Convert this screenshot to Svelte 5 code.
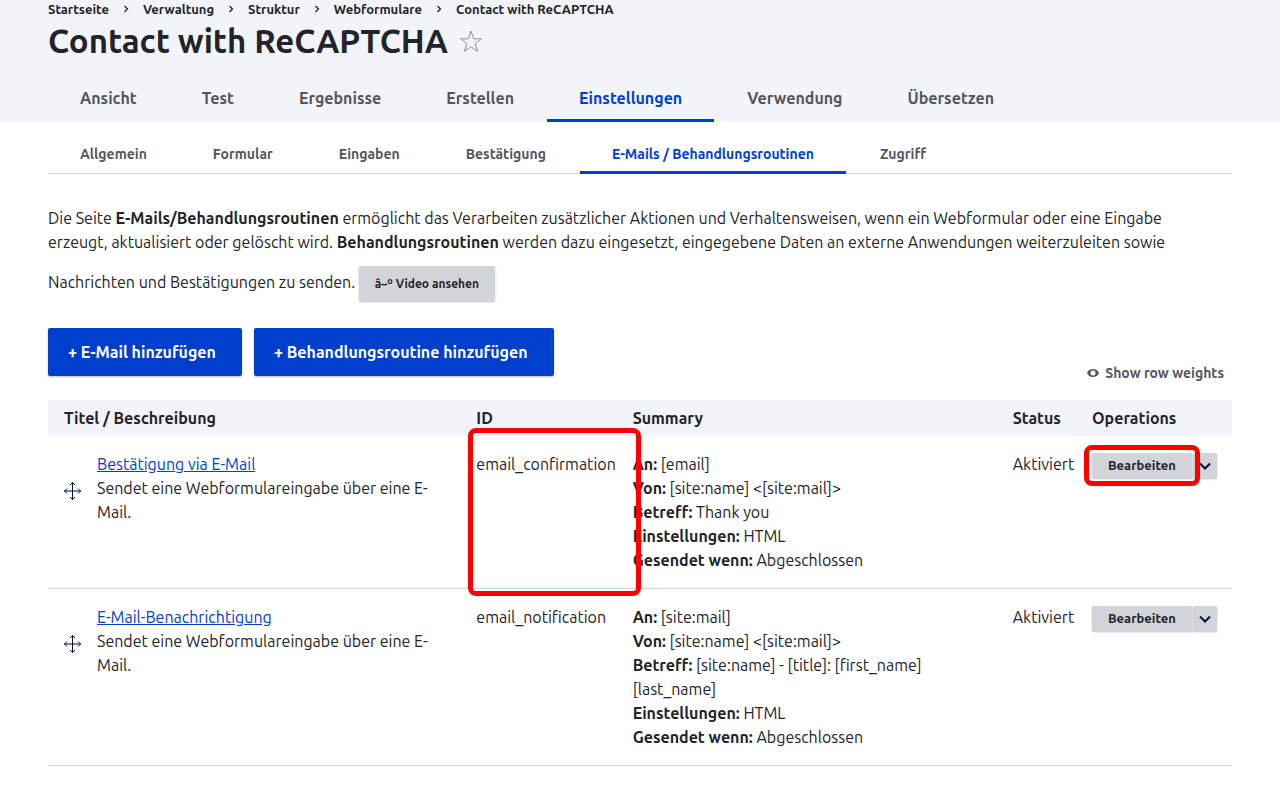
<script lang="ts">
	interface Handler {
		title: string;
		description: string;
		id: string;
		summary: [string, string][];
		status: string;
		marked: boolean;
	}

	const breadcrumb = ['Startseite', 'Verwaltung', 'Struktur', 'Webformulare'];
	const pageTitle = 'Contact with ReCAPTCHA';

	const primaryTabs = ['Ansicht', 'Test', 'Ergebnisse', 'Erstellen', 'Einstellungen', 'Verwendung', 'Übersetzen'];
	const secondaryTabs = ['Allgemein', 'Formular', 'Eingaben', 'Bestätigung', 'E-Mails / Behandlungsroutinen', 'Zugriff'];

	const handlers: Handler[] = [
		{
			title: 'Bestätigung via E-Mail',
			description: 'Sendet eine Webformulareingabe über eine E-Mail.',
			id: 'email_confirmation',
			summary: [
				['An:', '[email]'],
				['Von:', '[site:name] <[site:mail]>'],
				['Betreff:', 'Thank you'],
				['Einstellungen:', 'HTML'],
				['Gesendet wenn:', 'Abgeschlossen']
			],
			status: 'Aktiviert',
			marked: true
		},
		{
			title: 'E-Mail-Benachrichtigung',
			description: 'Sendet eine Webformulareingabe über eine E-Mail.',
			id: 'email_notification',
			summary: [
				['An:', '[site:mail]'],
				['Von:', '[site:name] <[site:mail]>'],
				['Betreff:', '[site:name] - [title]: [first_name] [last_name]'],
				['Einstellungen:', 'HTML'],
				['Gesendet wenn:', 'Abgeschlossen']
			],
			status: 'Aktiviert',
			marked: false
		}
	];

	let activePrimary = $state('Einstellungen');
	let activeSecondary = $state('E-Mails / Behandlungsroutinen');
</script>

<header>
	<nav class="breadcrumb" aria-label="Breadcrumb">
		{#each breadcrumb as item (item)}
			<a href="#{item}">{item}</a>
			<svg width="6" height="8" viewBox="0 0 6 8" aria-hidden="true"><path d="M1.5 1 4.5 4 1.5 7" /></svg>
		{/each}
		<span>{pageTitle}</span>
	</nav>
	<div class="title">
		<h1>{pageTitle}</h1>
		<button class="star" aria-label="Shortcut">
			<svg width="24" height="24" viewBox="0 0 24 24"><path d="M12 2 14.6 9.8H22.3L16.2 14.500 18.600 22.500 12 17.700 5.400 22.500 7.800 14.500 1.700 9.800H9.400Z" /></svg>
		</button>
	</div>
	<nav class="tabs primary" aria-label="Primary tabs">
		{#each primaryTabs as tab (tab)}
			<a href="#{tab}" class:active={tab === activePrimary} onclick={() => (activePrimary = tab)}>{tab}</a>
		{/each}
	</nav>
</header>

<main>
	<nav class="tabs secondary" aria-label="Secondary tabs">
		{#each secondaryTabs as tab (tab)}
			<a href="#{tab}" class:active={tab === activeSecondary} onclick={() => (activeSecondary = tab)}>{tab}</a>
		{/each}
	</nav>

	<p class="help">
		Die Seite <strong>E-Mails/Behandlungsroutinen</strong> ermöglicht das Verarbeiten zusätzlicher Aktionen und
		Verhaltensweisen, wenn ein Webformular oder eine Eingabe erzeugt, aktualisiert oder gelöscht wird.
		<strong>Behandlungsroutinen</strong> werden dazu eingesetzt, eingegebene Daten an externe Anwendungen
		weiterzuleiten sowie Nachrichten und Bestätigungen zu senden.
		<button class="video">â–º Video ansehen</button>
	</p>

	<div class="toolbar">
		<button class="action">+ E-Mail hinzufügen</button>
		<button class="action">+ Behandlungsroutine hinzufügen</button>
		<button class="weights">
			<svg width="12" height="8" viewBox="0 0 12 8" aria-hidden="true">
				<path fill-rule="evenodd" d="M6 0C3.2 0 1.1 1.6 0 4c1.1 2.4 3.2 4 6 4s4.9-1.6 6-4C10.9 1.6 8.8 0 6 0Zm0 1.5a2.5 2.5 0 1 1 0 5 2.5 2.5 0 0 1 0-5Z" />
			</svg>
			Show row weights
		</button>
	</div>

	<table>
		<thead>
			<tr>
				<th>Titel / Beschreibung</th>
				<th class="c-id">ID</th>
				<th class="c-summary">Summary</th>
				<th class="c-status">Status</th>
				<th class="c-ops">Operations</th>
			</tr>
		</thead>
		<tbody>
			{#each handlers as h (h.id)}
				<tr>
					<td>
						<div class="handler">
							<svg class="drag" width="18" height="18" viewBox="0 0 18 18" aria-hidden="true">
								<path d="M8.500 0.500V17.500M0 9H17M6 3 8.500 0.500 11 3M6 15 8.500 17.500 11 15M3 6.500 0.500 9 3 11.500M14 6.500 16.500 9 14 11.500" />
							</svg>
							<div>
								<a href="#{h.id}">{h.title}</a><br />
								{h.description}
							</div>
						</div>
					</td>
					<td class="id" class:marked={h.marked}>{h.id}</td>
					<td>
						{#each h.summary as [label, value] (label)}
							<div><strong>{label}</strong> {value}</div>
						{/each}
					</td>
					<td>{h.status}</td>
					<td>
						<div class="dropbutton">
							<span class="main-op" class:marked={h.marked}><button>Bearbeiten</button></span>
							<button class="toggle" aria-label="List additional actions">
								<svg width="12" height="8" viewBox="0 0 12 8"><path d="M1 1.5 6 6.5 11 1.5" /></svg>
							</button>
						</div>
					</td>
				</tr>
			{/each}
		</tbody>
	</table>
</main>

<style>
	:global(body) {
		background: #fff;
		color: #232429;
		font: 16px/24px Ubuntu, 'Noto Sans', sans-serif;
	}
	button {
		border: 0;
		padding: 0;
		font: inherit;
		color: inherit;
		background: none;
		cursor: pointer;
	}
	header {
		background: #f3f4f9;
		padding: 0 48px;
	}
	.breadcrumb {
		display: flex;
		align-items: center;
		gap: 14px;
		font-size: 13px;
		font-weight: 700;
		line-height: 18px;
	}
	.breadcrumb a {
		color: inherit;
		text-decoration: none;
	}
	.breadcrumb svg,
	.star svg {
		fill: none;
		stroke: #232429;
	}
	.breadcrumb svg {
		stroke-width: 1.3;
	}
	.title {
		display: flex;
		align-items: center;
		gap: 11px;
	}
	h1 {
		margin: 0;
		font-size: 33px;
		font-weight: 700;
		line-height: 46px;
	}
	.star {
		display: flex;
	}
	.star svg {
		stroke: #8e929c;
	}
	.tabs {
		display: flex;
	}
	.tabs a {
		padding: 0 32px;
		border-bottom: 3px solid transparent;
		color: #55565b;
		font-weight: 700;
		text-decoration: none;
		white-space: nowrap;
	}
	.tabs .active {
		color: #003ecc;
		border-color: #003ecc;
	}
	.primary {
		gap: 1px;
		padding-top: 14px;
	}
	.primary a {
		line-height: 41px;
	}
	.secondary {
		gap: 2px;
		padding-top: 16px;
		border-bottom: 1px solid #d3d4d9;
	}
	.secondary a {
		margin-bottom: -1px;
		font-size: 14px;
		line-height: 33px;
	}
	main {
		padding: 0 48px;
	}
	.help {
		margin: 32px 0 27px;
		padding-right: 16px;
	}
	.video {
		margin-top: 12px;
		padding: 0 16px;
		border-radius: 2px;
		background: #d3d4d9;
		box-shadow: 0 1px 2px rgba(0, 0, 0, 0.25);
		font-size: 12px;
		font-weight: 700;
		line-height: 35px;
	}
	.toolbar {
		display: flex;
		align-items: flex-start;
		gap: 12px;
		margin-bottom: 15px;
	}
	.action {
		padding: 0 26px 0 20px;
		border-radius: 2px;
		background: #003ecc;
		box-shadow: 0 1px 2px rgba(0, 0, 0, 0.25);
		color: #fff;
		font-weight: 700;
		line-height: 48px;
	}
	.weights {
		display: flex;
		align-items: center;
		gap: 6px;
		margin: 33px 8px 0 auto;
		color: #55565b;
		font-size: 14px;
		font-weight: 700;
		line-height: 24px;
	}
	.weights svg {
		fill: #55565b;
	}
	table {
		width: 100%;
		table-layout: fixed;
		border-collapse: collapse;
	}
	th,
	td {
		box-sizing: border-box;
		text-align: left;
	}
	th {
		padding: 6px 8px;
		background: #f3f4f9;
	}
	td {
		padding: 16px 8px;
		border-bottom: 1px solid #d3d4d9;
		vertical-align: top;
	}
	th:first-child,
	td:first-child {
		padding-left: 16px;
	}
	.c-id {
		width: 13.2%;
	}
	.c-summary {
		width: 32.1%;
	}
	.c-status {
		width: 6.7%;
	}
	.c-ops {
		width: 12.5%;
	}
	.handler {
		display: flex;
		align-items: center;
		gap: 15px;
	}
	.handler a {
		color: #003ecc;
	}
	.drag {
		flex: none;
		margin-top: 5px;
		fill: none;
		stroke: #000f33;
	}
	.dropbutton {
		display: flex;
		gap: 1px;
		padding-top: 1px;
	}
	.dropbutton button {
		height: 25px;
		background: #d3d4d9;
		box-shadow: 0 1px 2px rgba(0, 0, 0, 0.25);
	}
	.main-op {
		display: flex;
		position: relative;
	}
	.main-op button {
		padding: 0 16px;
		border-radius: 2px 0 0 2px;
		font-size: 13px;
		font-weight: 700;
		line-height: 25px;
	}
	.toggle {
		display: flex;
		align-items: center;
		justify-content: center;
		width: 24px;
		border-radius: 0 2px 2px 0;
	}
	.toggle svg {
		fill: none;
		stroke: #000f33;
		stroke-width: 2;
	}
	.id {
		position: relative;
	}
	/* red highlight frames drawn over the table */
	.marked::after {
		content: '';
		position: absolute;
		z-index: 1;
		inset: -8px;
		border: 5px solid #f00;
		border-radius: 8px;
		pointer-events: none;
	}
	.id.marked::after {
		inset: -8px -16px -8px 0;
	}
</style>
